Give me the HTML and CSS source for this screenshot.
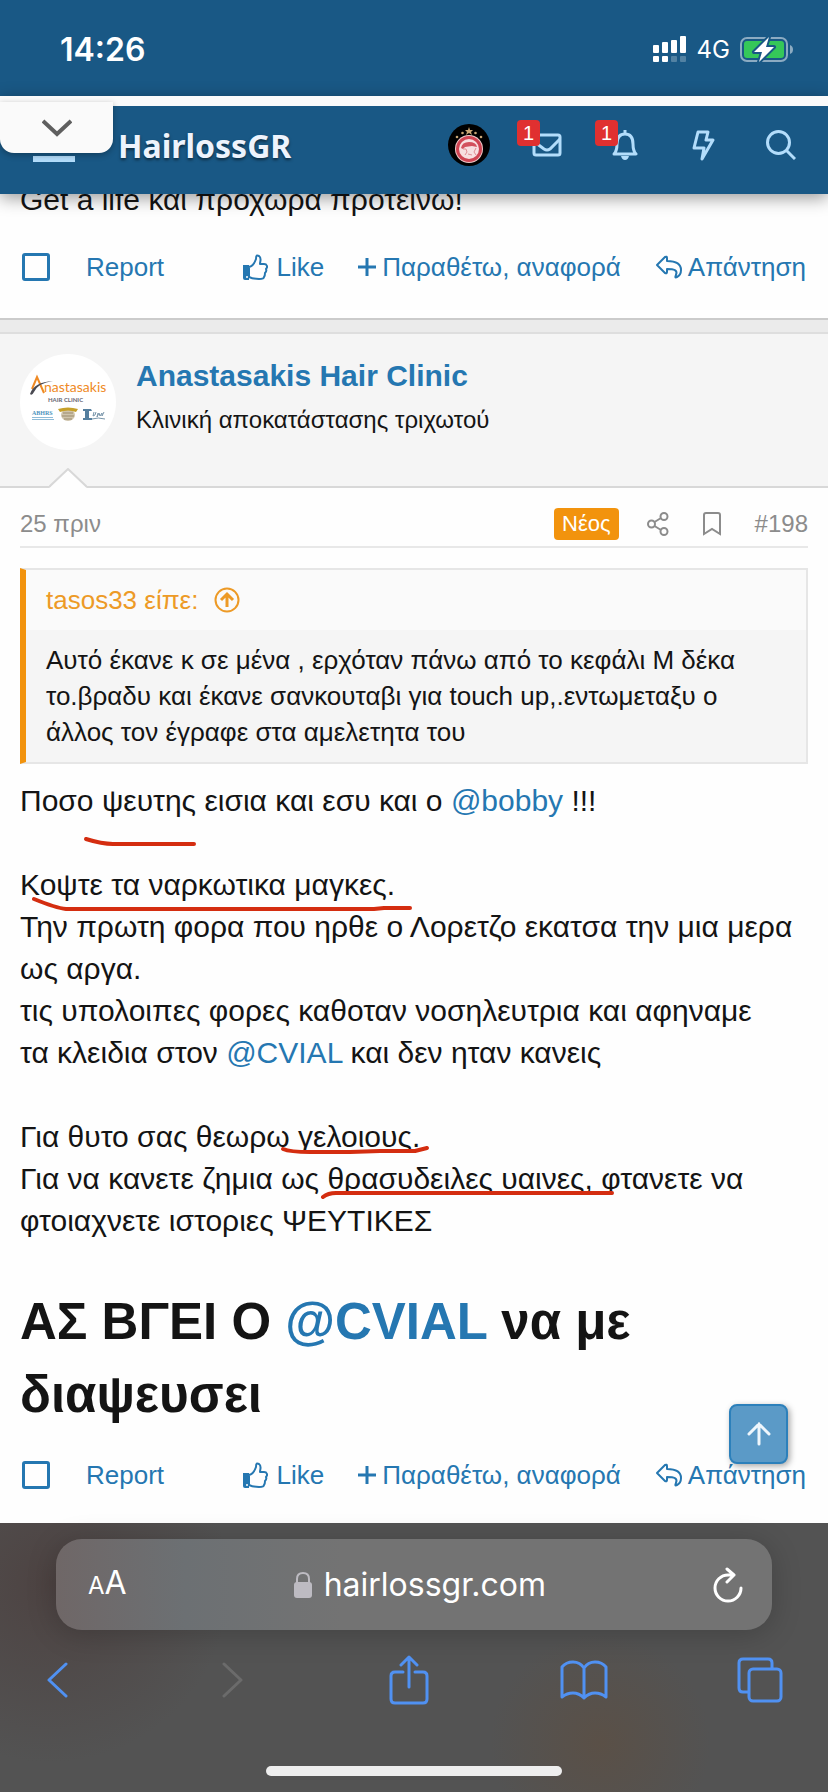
FILE: index.html
```
<!DOCTYPE html>
<html lang="el">
<head>
    <meta charset="UTF-8">
    <meta name="viewport" content="width=device-width, initial-scale=1.0">
    <title>HairlossGR</title>
    <link rel="stylesheet" href="styles.css">
</head>
<body>
    <div class="status-bar">
        <span class="clock">14:26</span>
        <div class="status-icons">
            <svg width="34" height="28" viewBox="0 0 34 28" fill="#fff">
                <rect x="0" y="9" width="6" height="8" rx="1"/>
                <rect x="9" y="6" width="6" height="11" rx="1"/>
                <rect x="18" y="4" width="6" height="13" rx="1"/>
                <rect x="27" y="0" width="6" height="17" rx="1"/>
                <rect x="0" y="20" width="6" height="6" rx="1"/>
                <rect x="9" y="20" width="6" height="6" rx="1"/>
                <rect x="18" y="20" width="6" height="6" rx="1" opacity=".25"/>
                <rect x="27" y="20" width="6" height="6" rx="1" opacity=".25"/>
            </svg>
            <span class="network">4G</span>
            <svg width="54" height="28" viewBox="0 0 54 28">
                <rect x="1" y="2" width="46" height="23" rx="6" fill="#195885" stroke="#8cabc2" stroke-width="2"/>
                <rect x="4" y="5" width="40" height="17" rx="3" fill="#35c759"/>
                <path d="M50 9v9q3-1 3-4.500t-3-4.500z" fill="#8cabc2"/>
                <path d="M29 1L14 16h8l-3 10 15-15h-8z" fill="#fff" stroke="#195885" stroke-width="4" paint-order="stroke" stroke-linejoin="round"/>
            </svg>
        </div>
    </div>

    <header class="nav">
        <button class="pull-tab" aria-label="Κλείσιμο">
            <svg width="30" height="18" viewBox="0 0 30 18" fill="none" stroke="#5f5f5f" stroke-width="4"><path d="M1 2l14 13L29 2"/></svg>
        </button>
        <button class="menu" aria-label="Μενού"></button>
        <a class="brand" href="#">HairlossGR</a>
        <nav class="nav-links">
            <a href="#" aria-label="Λογαριασμός">
                <svg width="42" height="42" viewBox="0 0 42 42">
                    <circle cx="21" cy="21" r="21" fill="#000"/>
                    <g fill="#c9a675">
                        <path d="M21 3l1 3h3l-2 2 1 3-3-2-3 2 1-3-2-2h3z"/>
                        <circle cx="14.500" cy="9" r="1.300"/><circle cx="27.500" cy="9" r="1.300"/>
                        <circle cx="9" cy="13" r="1.300"/><circle cx="33" cy="13" r="1.300"/>
                    </g>
                    <circle cx="21" cy="25" r="14" fill="#f0c9c9"/>
                    <circle cx="21" cy="25" r="13" fill="#cf4452"/>
                    <circle cx="21" cy="25" r="10" fill="#f7dfe0"/>
                    <path d="M13 24q1-6 8-6t8 5l-5-1-7 1-2 2z" fill="#d2505c"/>
                    <path d="M15 25h3l1 3-2 3M28 24l-2 4 2 3M20 30l4 1" fill="none" stroke="#e08d94"/>
                </svg>
            </a>
            <a href="#" aria-label="Μηνύματα">
                <svg width="30" height="24" viewBox="0 0 30 24" fill="none" stroke="#b3ddfb" stroke-width="3"><rect x="2" y="2" width="26" height="20" rx="2"/><path d="M4 10l8 6q3 2 6 0L28 6"/></svg>
                <span class="badge">1</span>
            </a>
            <a href="#" aria-label="Ειδοποιήσεις">
                <svg width="26" height="30" viewBox="0 0 26 30" fill="none" stroke="#b3ddfb" stroke-width="3" stroke-linejoin="round"><path d="M13 0v3M2 24c3-3 3-6 3-10 0-7 3-10 8-10s8 3 8 10c0 4 0 7 3 10z"/><path d="M9 26h8q-1 4-4 4t-4-4z" fill="#b3ddfb" stroke="none"/></svg>
                <span class="badge">1</span>
            </a>
            <a href="#" aria-label="Τι νέο υπάρχει">
                <svg width="23" height="31" viewBox="0 0 23 31" fill="none" stroke="#b3ddfb" stroke-width="3" stroke-linejoin="round"><path d="M6 2h10l-2 8h7L10 29l2-11H2z"/></svg>
            </a>
            <a href="#" aria-label="Αναζήτηση">
                <svg width="30" height="30" viewBox="0 0 30 30" fill="none" stroke="#b3ddfb" stroke-width="3"><circle cx="12.500" cy="12.500" r="11"/><path d="M20 20l9 9"/></svg>
            </a>
        </nav>
    </header>

    <main class="thread">
        <article class="post-tail">
            <p class="message-line">Get a life και προχωρά προτείνω!</p>
            <div class="actions">
                <input type="checkbox" aria-label="Επιλογή">
                <a href="#" class="report">Report</a>
                <a href="#" class="like"><svg width="25" height="27" viewBox="0 0 25 27" fill="none" stroke="#2577b1" stroke-width="2" stroke-linejoin="round"><path d="M0 11h6v15H2q-2 0-2-2z" fill="#2577b1" stroke="none"/><circle cx="4" cy="23" r="1" fill="#fff" stroke="none"/><path d="M6 13c4-1 6-5 7-8 0-4 1-4 3-3 3 2 1 5 1 8h4c3 0 4 3 2 5 1 2 0 3-1 4 0 2 0 3-1 4 0 2-3 2-5 2-4 0-6 0-10-2z"/></svg>Like</a>
                <a href="#" class="quote-link"><svg width="18" height="18" viewBox="0 0 18 18" stroke="#2577b1" stroke-width="3"><path d="M9 0v18M0 9h18"/></svg>Παραθέτω, αναφορά</a>
                <a href="#" class="reply"><svg width="27" height="24" viewBox="0 0 27 24" fill="none" stroke="#2577b1" stroke-width="2" stroke-linejoin="round"><path d="M2 10L10 2q2-1 2 1v3c9 0 14 3 14 9 0 4-2 6-4 7-2 1-2 0-1-2 2-5-2-6-9-6v3q0 2-2 1z"/></svg>Απάντηση</a>
            </div>
        </article>
        <div class="separator"></div>
        <article class="post">
            <header class="author">
                <svg class="avatar" width="96" height="96" viewBox="0 0 96 96">
                    <circle cx="48" cy="48" r="48" fill="#fff"/>
                    <path d="M12 35L17 23L24 39" fill="none" stroke="#ef8a25" stroke-width="2"/>
                    <path d="M10 40Q14 28 33 27Q18 29 14 38Q12 42 10 40z" fill="#4a4a52"/>
                    <text x="24" y="38" class="logo-name">nastasakis</text>
                    <text x="28" y="48" class="logo-sub">HAIR CLINIC</text>
                    <text x="12" y="61" class="logo-abhrs">ABHRS</text>
                    <path d="M12 63.500h21M12 65.500h22" stroke="#8fbcd8"/>
                    <ellipse cx="48" cy="61" rx="7" ry="6" fill="#cfc4ac"/>
                    <path d="M43 59h10M42 62h12M44 65h8" stroke="#9b8b6c"/>
                    <path d="M38 55q10-3 20 0l-2 3q-8-3-16 0z" fill="#c6a02a"/>
                    <path d="M63 55h8l1 2h-9zM65 57h4v7h3v2h-9v-2h2z" fill="#557f9f"/>
                    <path d="M72 65q6-2 13 0M74 58l-1 4 2-1 1-3M78 59l-1 4 2-4 1 3 2-3v3l2-4" fill="none" stroke="#7895aa"/>
                </svg>
                <div class="author-text">
                    <h4><a href="#">Anastasakis Hair Clinic</a></h4>
                    <h5>Κλινική αποκατάστασης τριχωτού</h5>
                </div>
                <svg class="notch" width="38" height="20" viewBox="0 0 38 20"><path d="M0 20L19 1l19 19z" fill="#fefefe"/><path d="M0 19L19 1l19 18" fill="none" stroke="#d8d8d8" stroke-width="2"/></svg>
            </header>
            <div class="message">
                <div class="attribution">
                    <a href="#" class="date">25 πριν</a>
                    <span class="new">Νέος</span>
                    <a href="#" aria-label="Κοινή χρήση"><svg width="22" height="24" viewBox="0 0 22 24" fill="none" stroke="#8c8c8c" stroke-width="2"><circle cx="4.500" cy="12" r="3.500"/><circle cx="17" cy="4.500" r="3.500"/><circle cx="17" cy="19.500" r="3.500"/><path d="M7.500 10L14 6M7.500 14l6.500 4"/></svg></a>
                    <a href="#" aria-label="Σελιδοδείκτης"><svg width="18" height="24" viewBox="0 0 18 24" fill="none" stroke="#8c8c8c" stroke-width="2"><path d="M1 22V3q0-2 2-2h12q2 0 2 2v19l-8-5z"/></svg></a>
                    <a href="#" class="number">#198</a>
                </div>
                <blockquote class="quote">
                    <a href="#" class="quote-title">tasos33 είπε:
                        <svg width="26" height="26" viewBox="0 0 26 26" fill="none" stroke="#ed9a26" stroke-width="2"><circle cx="13" cy="13" r="11.500"/><path d="M13 20V8M7 13l6-6 6 6" stroke-width="3"/></svg>
                    </a>
                    <p>Αυτό έκανε κ σε μένα , ερχόταν πάνω από το κεφάλι Μ δέκα<br>το.βραδυ και έκανε σανκουταβι για touch up,.εντωμεταξυ ο<br>άλλος τον έγραφε στα αμελετητα του</p>
                </blockquote>
                <div class="body-text">
                    Ποσο ψευτης εισια και εσυ και ο <a href="#">@bobby</a> !!!<br><br>
                    Κοψτε τα ναρκωτικα μαγκες.<br>
                    Την πρωτη φορα που ηρθε ο Λορετζο εκατσα την μια μερα<br>ως αργα.<br>
                    τις υπολοιπες φορες καθοταν νοσηλευτρια και αφηναμε<br>τα κλειδια στον <a href="#">@CVIAL</a> και δεν ηταν κανεις<br><br>
                    Για θυτο σας θεωρω γελοιους.<br>
                    Για να κανετε ζημια ως θρασυδειλες υαινες, φτανετε να<br>φτοιαχνετε ιστοριες ΨΕΥΤΙΚΕΣ
                    <!-- red pen strokes over the text -->
                    <svg class="pen" width="828" height="480" viewBox="0 780 828 480" fill="none" stroke="#d42d10" stroke-width="4" stroke-linecap="round" stroke-linejoin="round">
                        <path d="M86 839Q102 844 113 844H194"/>
                        <path d="M34 899Q56 908 66 909H374L384 908H410"/>
                        <path d="M283 1149Q290 1152 310 1152H350L380 1151H415L427 1148"/>
                        <path d="M323 1197Q328 1193 336 1193H612"/>
                    </svg>
                </div>
                <h1>ΑΣ ΒΓΕΙ Ο <a href="#">@CVIAL</a> να με<br>διαψευσει</h1>
            </div>
            <div class="actions">
                <input type="checkbox" aria-label="Επιλογή">
                <a href="#" class="report">Report</a>
                <a href="#" class="like"><svg width="25" height="27" viewBox="0 0 25 27" fill="none" stroke="#2577b1" stroke-width="2" stroke-linejoin="round"><path d="M0 11h6v15H2q-2 0-2-2z" fill="#2577b1" stroke="none"/><circle cx="4" cy="23" r="1" fill="#fff" stroke="none"/><path d="M6 13c4-1 6-5 7-8 0-4 1-4 3-3 3 2 1 5 1 8h4c3 0 4 3 2 5 1 2 0 3-1 4 0 2 0 3-1 4 0 2-3 2-5 2-4 0-6 0-10-2z"/></svg>Like</a>
                <a href="#" class="quote-link"><svg width="18" height="18" viewBox="0 0 18 18" stroke="#2577b1" stroke-width="3"><path d="M9 0v18M0 9h18"/></svg>Παραθέτω, αναφορά</a>
                <a href="#" class="reply"><svg width="27" height="24" viewBox="0 0 27 24" fill="none" stroke="#2577b1" stroke-width="2" stroke-linejoin="round"><path d="M2 10L10 2q2-1 2 1v3c9 0 14 3 14 9 0 4-2 6-4 7-2 1-2 0-1-2 2-5-2-6-9-6v3q0 2-2 1z"/></svg>Απάντηση</a>
            </div>
        </article>
        <button class="to-top" aria-label="Κορυφή">
            <svg width="24" height="24" viewBox="0 0 24 24" fill="none" stroke="#eef6fc" stroke-width="3" stroke-linecap="round"><path d="M12 22V2M2 12L12 2l10 10"/></svg>
        </button>
    </main>

    <footer class="browser">
        <div class="address">
            <button class="text-size" aria-label="Μέγεθος κειμένου"><small>A</small>A</button>
            <span class="host">
                <svg width="18" height="27" viewBox="0 0 18 27"><rect y="11" width="18" height="16" rx="3" fill="#bdbbc2"/><path d="M3 12V8q0-6 6-6t6 6v4" fill="none" stroke="#bdbbc2" stroke-width="2"/></svg>
                hairlossgr.com
            </span>
            <button class="reload" aria-label="Ανανέωση">
                <svg width="30" height="36" viewBox="0 0 30 36" fill="none" stroke="#fff" stroke-width="3" stroke-linecap="round" stroke-linejoin="round"><path d="M28 21A13 13 0 1 1 15 8h6M14 2l7 6-7 7"/></svg>
            </button>
        </div>
        <div class="toolbar">
            <button aria-label="Πίσω"><svg width="22" height="38" viewBox="0 0 22 38"><path d="M20 3L3 19l17 16"/></svg></button>
            <button aria-label="Εμπρός" class="disabled"><svg width="22" height="38" viewBox="0 0 22 38"><path d="M2 3l17 16L2 35"/></svg></button>
            <button aria-label="Κοινή χρήση"><svg width="40" height="50" viewBox="0 0 40 50"><path d="M14 17H6q-4 0-4 4v23q0 4 4 4h28q4 0 4-4V21q0-4-4-4h-8M20 32V2M12 10l8-8 8 8"/></svg></button>
            <button aria-label="Σελιδοδείκτες"><svg width="48" height="40" viewBox="0 0 48 40"><path d="M24 38V8Q20 2 13 2T2 7v30q5-4 11-4t11 5q5-5 11-5t11 4V7q-4-5-11-5T24 8"/></svg></button>
            <button aria-label="Καρτέλες"><svg width="46" height="46" viewBox="0 0 46 46"><rect x="12" y="12" width="32" height="32" rx="4"/><path d="M11 35H6q-4 0-4-4V6q0-4 4-4h25q4 0 4 4v5"/></svg></button>
        </div>
        <div class="home-indicator"></div>
    </footer>
</body>
</html>
```
FILE: styles.css
```
* {
    box-sizing: border-box;
}
body {
    margin: 0;
    min-height: 100vh;
    display: flex;
    flex-direction: column;
    background-color: #fefefe;
    color: #141414;
    font-family: "Liberation Sans", Arial, sans-serif;
    font-size: 30px;
    line-height: 42px;
}
a {
    color: #2577b1;
    text-decoration: none;
}
button {
    padding: 0;
    border: 0;
    background: none;
    color: inherit;
    font: inherit;
}
svg {
    display: block;
    flex: none;
}
h1, h4, h5, p {
    margin: 0;
}
.status-bar {
    height: 96px;
    padding: 4px 34px 0 60px;
    display: flex;
    align-items: center;
    justify-content: space-between;
    background-color: #195885;
    color: #fff;
    font-family: Inter, sans-serif;
}
.clock {
    font-size: 32px;
    font-weight: 600;
}
.status-icons {
    display: flex;
    align-items: center;
    gap: 10px;
}
.network {
    font-size: 24px;
}
.nav {
    position: relative;
    z-index: 2;
    height: 98px;
    padding: 0 8px 0 33px;
    border-top: 10px solid #fafafa;
    display: flex;
    align-items: center;
    background-color: #195885;
    box-shadow: 0 4px 16px rgba(0, 0, 0, 0.4);
}
.pull-tab {
    position: absolute;
    left: 0;
    top: -4px;
    width: 113px;
    height: 51px;
    display: flex;
    align-items: center;
    justify-content: center;
    background-color: #fafafa;
    border-radius: 0 0 14px 14px;
    box-shadow: 0 2px 6px rgba(0, 0, 0, 0.3);
}
.menu {
    width: 42px;
    height: 24px;
    border-bottom: 6px solid #b3ddfb;
    border-top: 6px solid #b3ddfb;
}
.brand {
    margin: -8px auto 0 43px;
    color: #eef3fc;
    font-family: "Noto Sans", sans-serif;
    font-size: 32px;
    font-weight: 700;
    text-shadow: 0 2px 3px rgba(0, 0, 0, 0.5);
}
.nav-links {
    display: flex;
    margin-top: -10px;
}
.nav-links a {
    position: relative;
    display: flex;
    align-items: center;
    justify-content: center;
    width: 78px;
    height: 42px;
}
.badge {
    position: absolute;
    left: 9px;
    top: -4px;
    width: 23px;
    height: 26px;
    border-radius: 4px;
    background-color: #e03030;
    color: #fff;
    font-size: 20px;
    line-height: 26px;
    text-align: center;
}
.thread {
    position: relative;
    flex: 1;
}
.message-line {
    height: 42px;
    margin-top: -15px;
    padding: 0 20px;
}
.actions {
    display: flex;
    align-items: center;
    height: 36px;
    padding: 0 22px;
    font-size: 26px;
    line-height: 36px;
}
.actions input {
    appearance: none;
    width: 28px;
    height: 28px;
    margin: 0 36px 0 0;
    border: 3px solid #2577b1;
    border-radius: 3px;
}
.actions a {
    display: flex;
    align-items: center;
    gap: 6px;
}
.actions .like {
    margin-left: auto;
    gap: 9px;
}
.actions .quote-link,
.actions .reply {
    margin-left: 34px;
}
.post-tail .actions {
    margin: 28px 0 33px;
}
.separator {
    height: 16px;
    background-color: #ebebeb;
    border-top: 2px solid #cbcbcb;
    border-bottom: 2px solid #dedede;
}
.author {
    position: relative;
    display: flex;
    gap: 20px;
    height: 154px;
    padding: 20px;
    background-color: #f5f5f5;
    border-bottom: 2px solid #d8d8d8;
}
.author h4 {
    font-size: 30px;
    line-height: 44px;
}
.author h5 {
    font-size: 24px;
    font-weight: 400;
    line-height: 44px;
}
.notch {
    position: absolute;
    left: 49px;
    bottom: -2px;
}
.logo-name {
    fill: #ef8a25;
    font: 14px Lato, sans-serif;
}
.logo-sub {
    fill: #666672;
    font: 700 6px Lato, sans-serif;
}
.logo-abhrs {
    fill: #4c92bd;
    font: 700 6px "Liberation Serif", serif;
}
.message {
    padding: 20px 20px 0;
}
.attribution {
    display: flex;
    align-items: center;
    gap: 34px;
    height: 40px;
    margin-bottom: 20px;
    padding-bottom: 6px;
    border-bottom: 2px solid #e8e8e8;
    font-size: 24px;
    line-height: 32px;
}
.attribution .date,
.attribution .number {
    color: #8c8c8c;
}
.date {
    margin-right: auto;
}
.new {
    margin-right: -6px;
    padding: 0 8px;
    border-radius: 4px;
    background-color: #f2930d;
    color: #fff;
    font-size: 22px;
}
.quote {
    margin: 0 0 16px;
    border: 2px solid #e6e6e6;
    border-left: 6px solid #f2930d;
    background-color: #f5f5f5;
    font-size: 26px;
    line-height: 36px;
}
.quote-title {
    display: flex;
    align-items: center;
    gap: 16px;
    padding: 12px 20px;
    background-color: #fafafa;
    color: #ed9a26;
}
.quote p {
    padding: 12px 0 12px 20px;
    white-space: nowrap;
}
.body-text {
    position: relative;
    white-space: nowrap;
}
.pen {
    position: absolute;
    left: -20px;
    top: 0;
}
.message h1 {
    margin-top: 43px;
    font-size: 51px;
    line-height: 73px;
}
.post .actions {
    margin: 26px 0 30px;
}
.to-top {
    position: absolute;
    right: 40px;
    bottom: 59px;
    width: 59px;
    height: 60px;
    display: flex;
    align-items: center;
    justify-content: center;
    border: 2px solid #2c80bb;
    border-radius: 8px;
    background-color: #5b9ac7;
    box-shadow: 2px 2px 6px rgba(0, 0, 0, 0.35);
}
.browser {
    padding: 16px 0;
    background: radial-gradient(circle at 600px 220px, #5a5047, transparent 110px), radial-gradient(circle at 50px 60px, #4d4342, transparent 180px), #535353;
}
.address {
    display: flex;
    align-items: center;
    justify-content: space-between;
    height: 91px;
    margin: 0 56px;
    padding: 0 29px 0 32px;
    border-radius: 26px;
    background: linear-gradient(90deg, #6f6767, #6c7073 18%, #737373 40%);
    box-shadow: 0 4px 30px rgba(0, 0, 0, 0.2);
    color: #fff;
    font-family: Inter, sans-serif;
    font-size: 32px;
}
.text-size small {
    font-size: 24px;
}
.host {
    display: flex;
    align-items: center;
    gap: 12px;
}
.toolbar {
    display: flex;
    align-items: center;
    justify-content: space-between;
    height: 100px;
    padding: 0 44px 0 33px;
}
.toolbar button {
    display: flex;
    justify-content: center;
    width: 48px;
}
.toolbar svg {
    fill: none;
    stroke: #5091f2;
    stroke-width: 3;
    stroke-linecap: round;
    stroke-linejoin: round;
}
.toolbar .disabled svg {
    stroke: #6b6b6b;
}
.home-indicator {
    width: 296px;
    height: 10px;
    margin: 36px auto 0;
    border-radius: 5px;
    background-color: #eee;
}
```
